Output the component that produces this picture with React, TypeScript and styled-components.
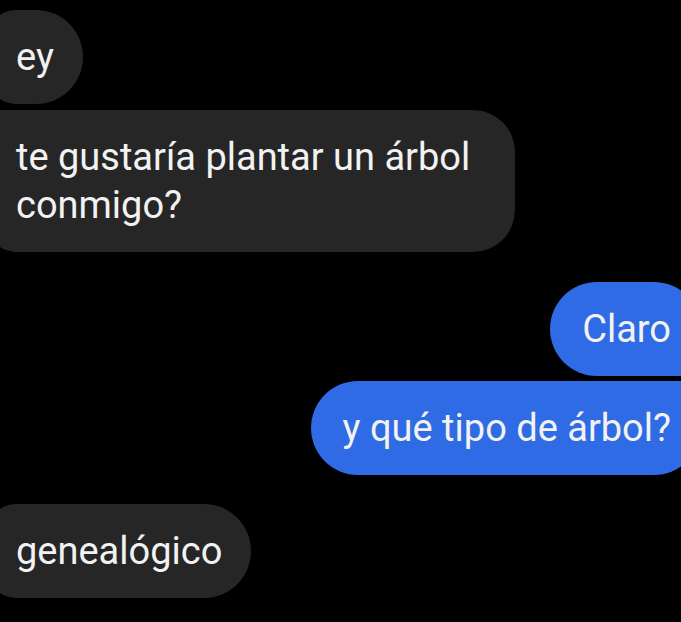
import React from "react";
import styled, { createGlobalStyle, css } from "styled-components";

const Global = createGlobalStyle`
  html, body {
    margin: 0;
    padding: 0;
    background: #000;
    overflow: hidden;
  }
  body {
    width: 681px;
    height: 622px;
    font-family: Roboto, "Noto Sans", "Liberation Sans", sans-serif;
  }
`;

const Thread = styled.div`
  display: flex;
  flex-direction: column;
  padding-top: 10px;
  width: 681px;
  height: 622px;
  overflow: hidden;
  box-sizing: border-box;
`;

type Side = "in" | "out";

const Bubble = styled.div<{
  $side: Side;
  $gap: number;
  $tl?: number;
  $tr?: number;
  $br?: number;
  $bl?: number;
}>`
  box-sizing: border-box;
  margin-top: ${(p) => p.$gap}px;
  font-size: 38px;
  line-height: 48px;
  padding-top: 23px;
  padding-bottom: 23px;
  color: #f2f2f2;
  border-radius: ${(p) => `${p.$tl ?? 47}px ${p.$tr ?? 47}px ${p.$br ?? 47}px ${p.$bl ?? 47}px`};
  ${(p) =>
    p.$side === "in"
      ? css`
          align-self: flex-start;
          margin-left: -12px;
          padding-left: 28px;
          padding-right: 29px;
          max-width: 527px;
          background: #262626;
        `
      : css`
          align-self: flex-end;
          margin-right: -20px;
          padding-left: 32px;
          padding-right: 30px;
          background: #2f6be4;
        `}
`;

export default function App() {
  return (
    <>
      <Global />
      <Thread>
        <Bubble $side="in" $gap={0} $tl={28} $bl={28}>
          ey
        </Bubble>
        <Bubble $side="in" $gap={6} $tl={6} $bl={28} $tr={42} $br={42}>
          te gustaría plantar un árbol conmigo?
        </Bubble>
        <Bubble $side="out" $gap={30} $br={8}>
          Claro
        </Bubble>
        <Bubble $side="out" $gap={5} $tr={8}>
          y qué tipo de árbol?
        </Bubble>
        <Bubble $side="in" $gap={29} $tl={28} $bl={28}>
          genealógico
        </Bubble>
      </Thread>
    </>
  );
}
